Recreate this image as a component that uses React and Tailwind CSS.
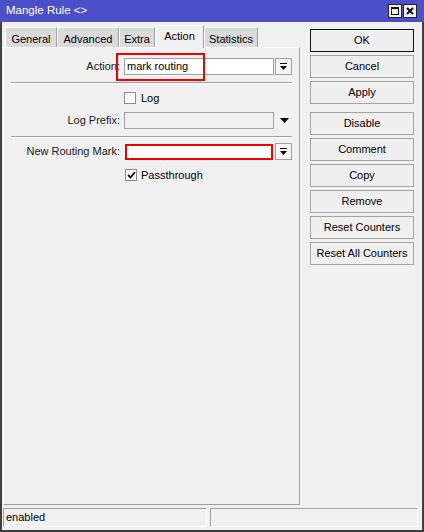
import React from 'react';

const tabs = [
    { name: 'General', w: 'w-[52px]' },
    { name: 'Advanced', w: 'w-[62px]' },
    { name: 'Extra', w: 'w-[36px]' },
    { name: 'Action', w: 'w-[49px]', active: true },
    { name: 'Statistics', w: 'w-[54px]' },
];

const buttons = [
    ['OK', 'Cancel', 'Apply'],
    ['Disable', 'Comment', 'Copy', 'Remove', 'Reset Counters', 'Reset All Counters'],
];

function DropButton() {
    return (
        <div className="w-[17px] h-[17px] border border-[#a0a0a0] bg-[#f4f4f4] flex items-center justify-center shrink-0">
            <svg width="9" height="8" viewBox="0 0 9 8">
                <rect x="1" y="0" width="7" height="1" fill="#000" />
                <path d="M1 3h7l-3.5 4z" fill="#000" />
            </svg>
        </div>
    );
}

function CheckBox({ checked }) {
    return (
        <div className="w-[12px] h-[12px] border border-[#8a8a8a] bg-white flex items-center justify-center shrink-0">
            {checked && (
                <svg width="9" height="8" viewBox="0 0 9 8">
                    <path d="M1 4l2.5 2.5L8 1" stroke="#000" strokeWidth="1.8" fill="none" />
                </svg>
            )}
        </div>
    );
}

function Separator() {
    return (
        <div className="ml-[7px] w-[281px]">
            <div className="h-[1px] bg-[#a0a0a0]" />
            <div className="h-[1px] bg-white" />
        </div>
    );
}

function Label({ children }) {
    return <div className="w-[116px] text-right text-[#1a1a1a] shrink-0">{children}</div>;
}

export default function App() {
    return (
        <div className="w-[424px] h-[532px] flex flex-col bg-[#f0f0f0] text-[11px] text-black font-['Liberation_Sans',Arial,sans-serif] leading-none">
            {/* title bar */}
            <div className="h-[22px] bg-[#4c50c8] flex items-center pl-[6px] pr-[7px] shrink-0">
                <div className="text-white text-[11.5px] flex-1">Mangle Rule &lt;&gt;</div>
                <div className="flex gap-[1px]">
                    <div className="w-[14px] h-[14px] bg-[#f0f0f0] border border-[#222] flex items-center justify-center">
                        <div className="w-[8px] h-[8px] border border-t-2 border-[#111]" />
                    </div>
                    <div className="w-[14px] h-[14px] bg-[#f0f0f0] border border-[#222] flex items-center justify-center">
                        <svg width="8" height="8" viewBox="0 0 8 8">
                            <path d="M1 1l6 6M7 1l-6 6" stroke="#111" strokeWidth="2" />
                        </svg>
                    </div>
                </div>
            </div>

            {/* body */}
            <div className="flex-1 flex flex-col border-x-2 border-b-2 border-[#3f3f3f]">
                <div className="flex-1 flex pl-[1px]">
                    {/* left: tabs + panel */}
                    <div className="w-[297px] flex flex-col">
                        <div className="h-[25px] pl-[2px] flex items-end">
                            {tabs.map((t) =>
                                t.active ? (
                                    <div
                                        key={t.name}
                                        className={`${t.w} h-[23px] -mb-[1px] relative z-10 bg-[#f0f0f0] border-l border-t border-white border-r border-r-[#a0a0a0] flex items-center justify-center pb-[2px]`}
                                    >
                                        {t.name}
                                    </div>
                                ) : (
                                    <div
                                        key={t.name}
                                        className={`${t.w} h-[20px] bg-[#dadada] border-l border-t border-white border-r border-r-[#a0a0a0] flex items-center justify-center pt-[3px]`}
                                    >
                                        {t.name}
                                    </div>
                                )
                            )}
                        </div>
                        <div className="flex-1 relative border-l border-t border-white border-r border-b border-r-[#a0a0a0] border-b-[#a0a0a0]">
                            {/* Action */}
                            <div className="mt-[10px] flex items-center h-[17px]">
                                <Label>Action:</Label>
                                <div className="ml-[4px] w-[150px] h-[17px] bg-white border border-[#a0a0a0] flex items-center px-[2px]">
                                    mark routing
                                </div>
                                <div className="ml-[1px]">
                                    <DropButton />
                                </div>
                            </div>
                            <div className="absolute left-[112px] top-[5px] w-[89px] h-[28px] border-2 border-[#ee0000]" />

                            <div className="mt-[7px]">
                                <Separator />
                            </div>

                            {/* Log */}
                            <div className="mt-[8px] ml-[120px] flex items-center gap-[5px] h-[12px]">
                                <CheckBox />
                                <span>Log</span>
                            </div>

                            {/* Log Prefix */}
                            <div className="mt-[8px] flex items-center h-[17px]">
                                <Label>Log Prefix:</Label>
                                <div className="ml-[4px] w-[150px] h-[17px] bg-[#f0f0f0] border border-[#a0a0a0]" />
                                <svg className="ml-[6px]" width="9" height="5" viewBox="0 0 9 5">
                                    <path d="M0 0h9l-4.5 5z" fill="#000" />
                                </svg>
                            </div>

                            <div className="mt-[7px]">
                                <Separator />
                            </div>

                            {/* New Routing Mark */}
                            <div className="mt-[5px] flex items-center h-[17px]">
                                <Label>New Routing Mark:</Label>
                                <div className="ml-[5px] w-[148px] h-[16px] bg-white border-2 border-[#ee0000]" />
                                <div className="ml-[2px]">
                                    <DropButton />
                                </div>
                            </div>

                            {/* Passthrough */}
                            <div className="mt-[9px] ml-[121px] flex items-center gap-[4px] h-[12px]">
                                <CheckBox checked />
                                <span>Passthrough</span>
                            </div>
                        </div>
                    </div>

                    {/* right buttons */}
                    <div className="ml-[10px] w-[104px] pt-[7px] flex flex-col gap-[8px]">
                        {buttons.map((group, gi) => (
                            <div key={gi} className="flex flex-col gap-[3px]">
                                {group.map((b) => (
                                    <div
                                        key={b}
                                        className={`h-[23px] flex items-center justify-center bg-[#efefef] border ${
                                            b === 'OK' ? 'border-[#111]' : 'border-[#a3a3a3]'
                                        }`}
                                    >
                                        {b}
                                    </div>
                                ))}
                            </div>
                        ))}
                    </div>
                </div>

                {/* status bar */}
                <div className="h-[25px] flex pt-[3px] pb-[3px] pl-[1px] gap-[3px]">
                    <div className="w-[204px] border-l border-t border-[#a0a0a0] border-r border-b border-r-white border-b-white flex items-center pl-[2px]">
                        enabled
                    </div>
                    <div className="w-[208px] border-l border-t border-[#a0a0a0] border-r border-b border-r-white border-b-white" />
                </div>
            </div>
        </div>
    );
}
